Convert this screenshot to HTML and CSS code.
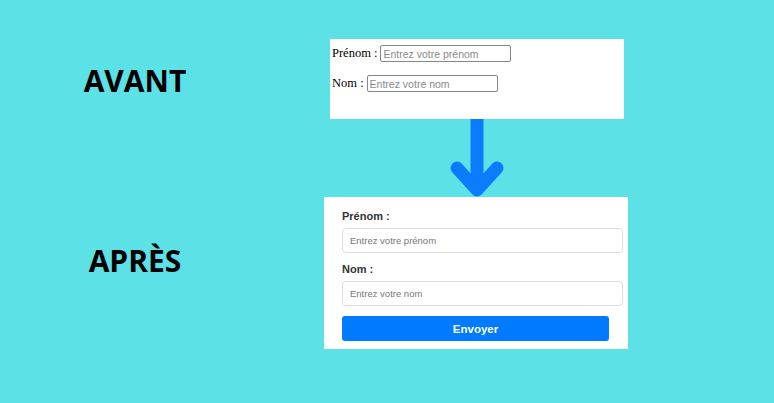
FILE: index.html
```html
<!DOCTYPE html>
<html lang="fr">
<head>
  <meta charset="UTF-8">
  <meta name="viewport" content="width=device-width, initial-scale=1.0">
  <title>Avant / Après</title>
  <link rel="stylesheet" href="styles.css">
</head>
<body>

  <div class="page">
    <h2 class="tag tag-avant">AVANT</h2>

    <div class="old-form">
      <div class="old-row">
        <label for="p1">Prénom :</label>
        <input id="p1" type="text" placeholder="Entrez votre prénom">
      </div>
      <div class="old-row">
        <label for="n1">Nom :</label>
        <input id="n1" type="text" class="short" placeholder="Entrez votre nom">
      </div>
    </div>

    <svg class="arrow" width="60" height="78" viewBox="0 0 60 78">
      <path d="M31 0 V70" fill="none" stroke="#0a7cfc" stroke-width="13"/>
      <path d="M11 49 L31 71 L51 49" fill="none" stroke="#0a7cfc" stroke-width="13" stroke-linecap="round" stroke-linejoin="round"/>
    </svg>

    <h2 class="tag tag-apres">APRÈS</h2>

    <form class="new-form">
      <label for="p2">Prénom :</label>
      <input id="p2" type="text" placeholder="Entrez votre prénom">
      <label for="n2">Nom :</label>
      <input id="n2" type="text" placeholder="Entrez votre nom">
      <button type="button">Envoyer</button>
    </form>
  </div>

</body>
</html>
```

FILE: styles.css
```css
body {
  margin: 0;
  background: #5ce1e6;
  font-family: "Liberation Sans", Arial, sans-serif;
}

.page {
  display: grid;
  grid-template-columns: 270px 304px;
  grid-template-rows: 80px 78px 152px;
  column-gap: 54px;
  padding-top: 39px;
}

/* gros titres à gauche */
.tag {
  grid-column: 1;
  align-self: start;
  margin: 0;
  text-align: center;
  font-family: "Open Sans", sans-serif;
  font-weight: 700;
  font-size: 30px;
  line-height: 1;
  color: #000;
}

.tag-avant {
  grid-row: 1;
  margin-top: 27px;
}

.tag-apres {
  grid-row: 3;
  margin-top: 49px;
}

/* ancien formulaire */
.old-form {
  grid-column: 2;
  grid-row: 1;
  margin-left: 6px;
  width: 294px;
  background: #fff;
  padding: 6px 2px 0;
  box-sizing: border-box;
}

.old-row {
  display: flex;
  align-items: center;
  height: 17px;
  margin-bottom: 13px;
  font-family: "Liberation Serif", "Times New Roman", serif;
  font-size: 12.5px;
  color: #000;
}

.old-row label {
  margin-right: 3px;
}

.old-row input {
  width: 131px;
  height: 17px;
  box-sizing: border-box;
  padding: 0 2px;
  border: 1px solid #858585;
  border-radius: 2px;
  font-family: "Liberation Sans", Arial, sans-serif;
  font-size: 10.5px;
}

.old-row input::placeholder {
  color: #8a8a8a;
}

.arrow {
  grid-column: 2;
  grid-row: 2;
  justify-self: center;
  display: block;
}

/* nouveau formulaire */
.new-form {
  grid-column: 2;
  grid-row: 3;
  display: flex;
  flex-direction: column;
  align-items: flex-start;
  background: #fff;
  padding: 13px 19px 0 18px;
  box-sizing: border-box;
  margin: 0;
}

.new-form label {
  font-size: 11px;
  font-weight: bold;
  color: #333;
  line-height: 13px;
  margin-bottom: 5px;
}

.new-form input {
  width: 281px;
  height: 25px;
  box-sizing: border-box;
  padding: 0 7px;
  border: 1px solid #ddd;
  border-radius: 4px;
  font-family: "Liberation Sans", Arial, sans-serif;
  font-size: 9.5px;
  margin-bottom: 10px;
}

.new-form input::placeholder {
  color: #777;
}

.new-form button {
  width: 267px;
  height: 25px;
  border: none;
  border-radius: 3px;
  background: #007bff;
  color: #fff;
  font-family: "Liberation Sans", Arial, sans-serif;
  font-size: 11.5px;
  font-weight: bold;
}
```
